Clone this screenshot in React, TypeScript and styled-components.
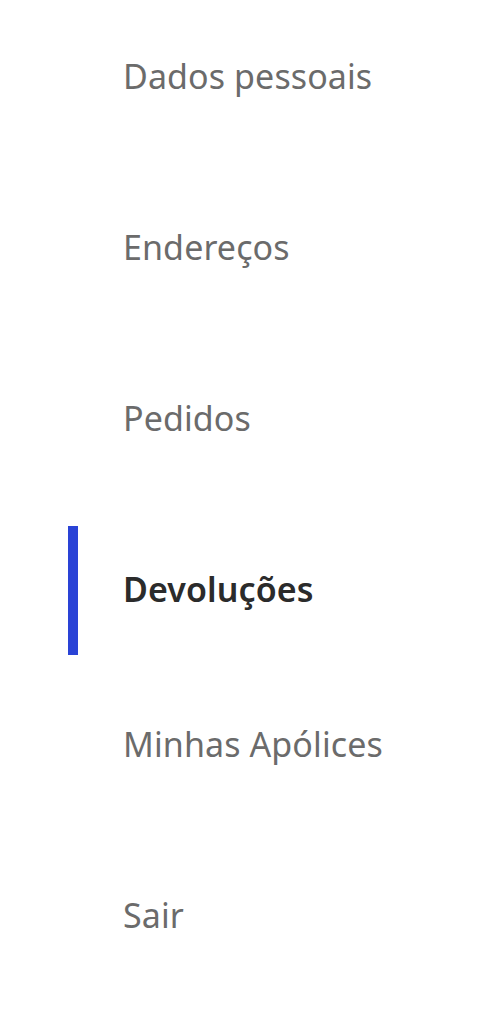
import styled, { createGlobalStyle } from 'styled-components';

const GlobalStyle = createGlobalStyle`
  html, body {
    margin: 0;
    padding: 0;
    background: #ffffff;
  }
`;

const MENU_ITEMS = [
  { label: 'Dados pessoais' },
  { label: 'Endereços' },
  { label: 'Pedidos' },
  { label: 'Devoluções', active: true },
  { label: 'Minhas Apólices' },
  { label: 'Sair' },
];

export default function App() {
  return (
    <>
      <GlobalStyle />
      <Nav>
        {MENU_ITEMS.map((item) => (
          <Item key={item.label} $active={!!item.active}>
            <Marker $active={!!item.active} />
            <Label $active={!!item.active}>{item.label}</Label>
          </Item>
        ))}
      </Nav>
    </>
  );
}

const Nav = styled.nav`
  display: flex;
  flex-direction: column;
  gap: 42px;
  padding: 13px 0 0 68px;
  width: 432px;
  font-family: 'Noto Sans', 'Open Sans', sans-serif;
`;

const Item = styled.a<{ $active: boolean }>`
  display: flex;
  align-items: center;
  gap: 45px;
  height: 129px;
  margin-bottom: ${({ $active }) => ($active ? '-16px' : '0')};
  text-decoration: none;
  cursor: pointer;
`;

const Marker = styled.span<{ $active: boolean }>`
  align-self: stretch;
  width: 10px;
  background: ${({ $active }) => ($active ? '#2a43d6' : 'transparent')};
`;

const Label = styled.span<{ $active: boolean }>`
  font-size: 34px;
  letter-spacing: 0.1px;
  font-weight: ${({ $active }) => ($active ? 600 : 400)};
  color: ${({ $active }) => ($active ? '#2b2b2b' : '#6b6b6b')};
  padding-bottom: 4px;
`;
